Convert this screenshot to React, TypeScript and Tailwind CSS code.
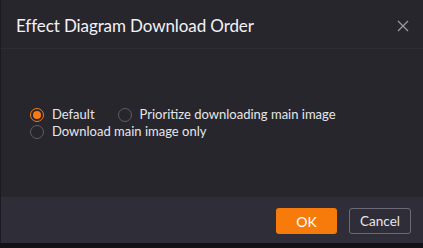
import React from "react";

function Radio({ checked, label }: { checked?: boolean; label: string }) {
  return (
    <label className="flex items-center gap-[8px] h-[17px] cursor-pointer">
      <span
        className={
          checked
            ? "w-[14px] h-[14px] rounded-full border-[1.5px] border-[#f77b12] flex items-center justify-center"
            : "w-[14px] h-[14px] rounded-full border-[1.5px] border-[#5f5e68]"
        }
      >
        {checked && <span className="w-[8px] h-[8px] rounded-full bg-[#f77b12]" />}
      </span>
      <span className="text-[13px] leading-[17px] text-[#e6e6ea]">{label}</span>
    </label>
  );
}

export default function App() {
  return (
    <div
      className="w-[423px] h-[248px] bg-[#121216] flex flex-col overflow-hidden"
      style={{ fontFamily: 'Lato, "Noto Sans", sans-serif' }}
    >
      <div className="flex-1 flex flex-col bg-[#27262d] border-l border-[#1c1b21]">
        <div className="h-[49px] flex items-center justify-between pl-[15px] pr-[12px] pt-[3px] border-b border-[#2e2d35]">
          <span className="text-[17px] text-[#f2f2f5] tracking-[-0.1px]">Effect Diagram Download Order</span>
          <svg width="12" height="12" viewBox="0 0 12 12" className="mr-[2px]">
            <path d="M1 1L11 11M11 1L1 11" stroke="#9a99a2" strokeWidth="1.3" />
          </svg>
        </div>
        <div className="flex-1 flex flex-col justify-center pl-[29px]">
          <div className="flex items-center gap-[23px]">
            <Radio checked label="Default" />
            <Radio label="Prioritize downloading main image" />
          </div>
          <Radio label="Download main image only" />
        </div>
        <div className="h-[46px] bg-[#2f2e38] flex items-center justify-end gap-[12px] pr-[12px] pt-[2px]">
          <button className="w-[61px] h-[26px] rounded-[3px] bg-[#f77b0a] text-white text-[14px]">OK</button>
          <button className="w-[62px] h-[26px] rounded-[3px] border border-[#6c6b75] text-[#e6e6ea] text-[13.5px]">Cancel</button>
        </div>
      </div>
      <div className="h-[5px]" />
    </div>
  );
}
